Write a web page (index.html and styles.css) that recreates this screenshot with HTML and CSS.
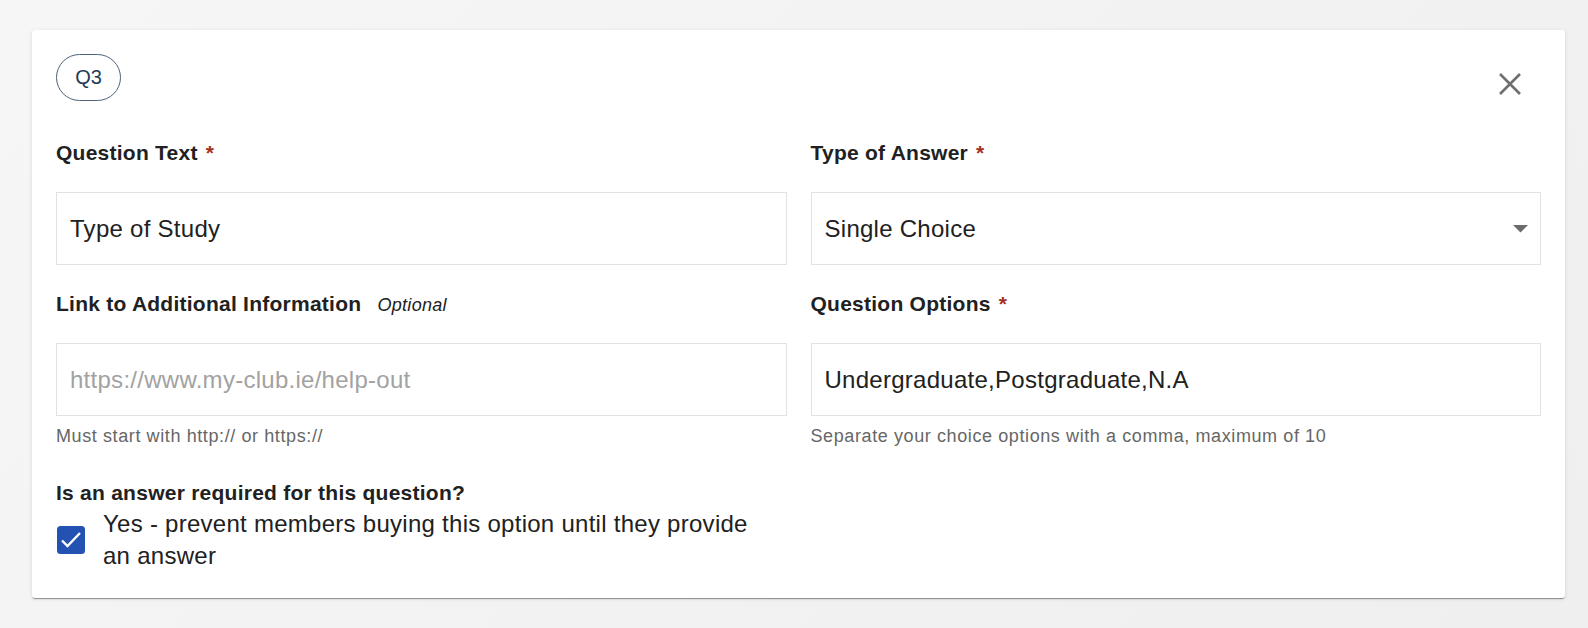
FILE: index.html
```html
<!DOCTYPE html>
<html lang="en">
<head>
<meta charset="utf-8">
<title>Question</title>
<link rel="stylesheet" href="styles.css">
</head>
<body>
<div class="card">
  <div class="header">
    <span class="pill">Q3</span>
    <button class="close" aria-label="Close">
      <svg width="22" height="22" viewBox="0 0 22 22"><path d="M1 1L21 21M21 1L1 21" stroke="#6f6f6f" stroke-width="2.6" fill="none"/></svg>
    </button>
  </div>
  <div class="grid">
    <div class="field">
      <div class="label">Question Text <span class="req">*</span></div>
      <input class="input" type="text" value="Type of Study">
    </div>
    <div class="field">
      <div class="label">Type of Answer <span class="req">*</span></div>
      <div class="input select">
        <span>Single Choice</span>
        <svg class="arrow" width="15" height="8" viewBox="0 0 15 8"><polygon points="0,0 15,0 7.5,7.5" fill="#6b6b6b"/></svg>
      </div>
    </div>
    <div class="field">
      <div class="label">Link to Additional Information <span class="opt">Optional</span></div>
      <input class="input" type="text" placeholder="https://www.my-club.ie/help-out">
      <div class="helper">Must start with http:// or https://</div>
    </div>
    <div class="field">
      <div class="label">Question Options <span class="req">*</span></div>
      <input class="input" type="text" value="Undergraduate,Postgraduate,N.A">
      <div class="helper">Separate your choice options with a comma, maximum of 10</div>
    </div>
  </div>
  <div class="required">
    <div class="req-title">Is an answer required for this question?</div>
    <label class="check-row">
      <span class="checkbox">
        <svg width="28" height="28" viewBox="0 0 28 28"><rect x="0" y="0" width="28" height="28" rx="3.5" fill="#2452b2"/><polyline points="5,14.5 10.5,20 23,7" fill="none" stroke="#fff" stroke-width="2.4"/></svg>
      </span>
      <span class="check-label">Yes - prevent members buying this option until they provide an answer</span>
    </label>
  </div>
</div>
</body>
</html>
```

FILE: styles.css
```css
* { box-sizing: border-box; }
html, body { margin: 0; }
body {
  background: linear-gradient(135deg, #f6f6f6 0%, #efefef 100%);
  min-height: 628px;
  padding: 30px 23px 0 32px;
  font-family: "Liberation Sans", Arial, Helvetica, sans-serif;
  color: #212121;
}
.card {
  background: #fff;
  border-radius: 3px;
  padding: 24px 24px 26px 24px;
  box-shadow: 0 2px 1px -1px rgba(0,0,0,0.28), 0 1px 1px 0 rgba(0,0,0,0.14), 0 1px 4px 0 rgba(0,0,0,0.10);
}
.header {
  display: flex;
  justify-content: space-between;
  align-items: flex-start;
}
.pill {
  display: inline-flex;
  align-items: center;
  justify-content: center;
  height: 47px;
  width: 65px;
  border: 1px solid #4d6278;
  border-radius: 24px;
  font-size: 20px;
  color: #1f3a55;
}
.close {
  border: 0;
  background: none;
  padding: 0;
  margin: 19px 20px 0 0;
  width: 22px;
  height: 22px;
  display: block;
  cursor: pointer;
}
.close svg { display: block; }
.grid {
  margin-top: 39px;
  display: grid;
  grid-template-columns: 1fr 1fr;
  column-gap: 24px;
  row-gap: 26px;
}
.field { display: flex; flex-direction: column; }
.label {
  font-size: 21px;
  font-weight: bold;
  line-height: 25px;
  height: 25px;
  letter-spacing: 0.25px;
  margin-bottom: 27px;
  white-space: nowrap;
}
.req { color: #a3301d; margin-left: 2px; }
.opt {
  font-weight: normal;
  font-style: italic;
  font-size: 18px;
  line-height: 1;
  letter-spacing: 0.3px;
  margin-left: 10px;
}
.input {
  height: 73px;
  width: 100%;
  border: 1px solid #e2e2e2;
  border-radius: 0;
  padding: 0 13px;
  font-family: "Liberation Sans", Arial, Helvetica, sans-serif;
  font-size: 24px;
  letter-spacing: 0.27px;
  color: #212121;
  background: #fff;
  outline: none;
  margin: 0;
}
.input::placeholder { color: #a2a2a2; opacity: 1; }
.select {
  display: flex;
  align-items: center;
  justify-content: space-between;
  padding-right: 12px;
}
.arrow { display: block; }
.helper {
  margin-top: 9px;
  font-size: 18px;
  line-height: 22px;
  letter-spacing: 0.6px;
  color: #666;
}
.required { margin-top: 33px; }
.req-title {
  font-size: 21px;
  font-weight: bold;
  line-height: 25px;
  letter-spacing: 0.25px;
}
.check-row {
  margin-top: 3px;
  display: flex;
  align-items: center;
}
.checkbox {
  width: 28px;
  height: 28px;
  margin-left: 1px;
  flex: none;
}
.checkbox svg { display: block; }
.check-label {
  margin-left: 18px;
  font-size: 24px;
  line-height: 32px;
  letter-spacing: 0.27px;
  max-width: 665px;
}
```
